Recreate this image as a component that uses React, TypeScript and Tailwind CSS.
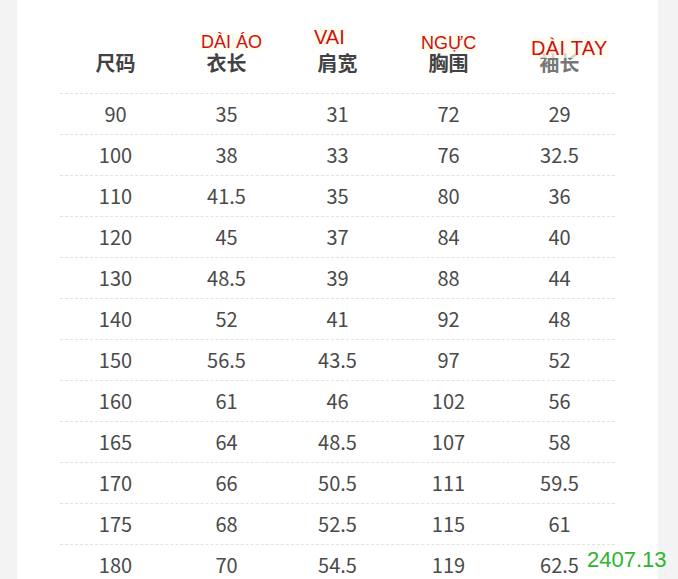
const headers = ["尺码", "衣长", "肩宽", "胸围", "袖长"];

const labels = [
  { text: "DÀI ÁO", pos: "left-[140px] top-[33px] text-[18px]" },
  { text: "VAI", pos: "left-[253px] top-[27px] text-[20px]" },
  { text: "NGỰC", pos: "left-[360px] top-[34px] text-[18px]" },
  { text: "DÀI TAY", pos: "left-[470px] top-[38px] text-[20px] tracking-[0.3px]" },
];

const rows = [
  ["90", "35", "31", "72", "29"],
  ["100", "38", "33", "76", "32.5"],
  ["110", "41.5", "35", "80", "36"],
  ["120", "45", "37", "84", "40"],
  ["130", "48.5", "39", "88", "44"],
  ["140", "52", "41", "92", "48"],
  ["150", "56.5", "43.5", "97", "52"],
  ["160", "61", "46", "102", "56"],
  ["165", "64", "48.5", "107", "58"],
  ["170", "66", "50.5", "111", "59.5"],
  ["175", "68", "52.5", "115", "61"],
  ["180", "70", "54.5", "119", "62.5"],
];

export default function App() {
  return (
    <div className="relative flex h-[579px] w-[678px] overflow-hidden bg-[#f3f3f3]">
      <div className="ml-[17px] h-full w-[641px] bg-white">
        <div className="ml-[43px] w-[555px] font-['Noto_Sans_CJK_SC',sans-serif]">
          {/* header */}
          <div className="relative grid h-[93px] grid-cols-5 pt-[53px]">
            {headers.map((h, i) => (
              <div
                key={h}
                className={`text-center text-[20px] font-bold leading-[20px] ${
                  i === 4 ? "text-[#777]" : "text-[#424242]"
                }`}
              >
                {h}
              </div>
            ))}
            {labels.map((l) => (
              <span
                key={l.text}
                className={`absolute ${l.pos} bg-[#fffbea]/70 px-[1px] font-['Liberation_Sans',Arial,sans-serif] leading-none text-[#d10f0f]`}
              >
                {l.text}
              </span>
            ))}
          </div>

          {/* rows */}
          {rows.map((r) => (
            <div
              key={r[0]}
              className="grid h-[41px] grid-cols-5 items-center border-t border-dashed border-[#e2e2e2] text-center text-[20px] text-[#4a4a4a]"
            >
              {r.map((v, j) => (
                <div key={j}>{v}</div>
              ))}
            </div>
          ))}
        </div>
      </div>

      <span className="absolute left-[587px] top-[549px] font-['Liberation_Sans',Arial,sans-serif] text-[22px] leading-[22px] text-[#2db52d]">
        2407.13
      </span>
    </div>
  );
}
